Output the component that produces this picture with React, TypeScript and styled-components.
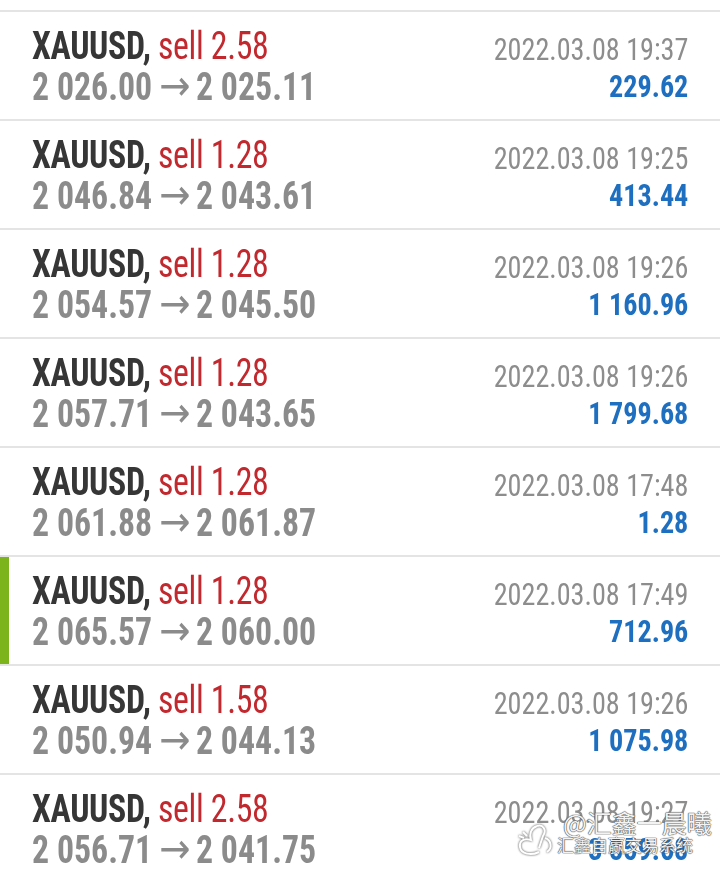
import styled, { createGlobalStyle } from "styled-components";

const GlobalStyle = createGlobalStyle`
    html, body {
        margin: 0;
        padding: 0;
        background: #ffffff;
    }

    body {
        font-family: Roboto, "Liberation Sans", sans-serif;
        font-stretch: 75%;
        overflow: hidden;
    }
`;

const Page = styled.div`
    position: relative;
    width: 720px;
    height: 874px;
    overflow: hidden;
    background: #fff;
`;

const List = styled.div`
    padding-top: 10px;
`;

const Row = styled.div<{ $active?: boolean }>`
    height: 107px;
    border-top: 2px solid #e4e4e4;
    display: flex;
    justify-content: space-between;
    align-items: flex-start;
    padding: 0 32px;
    box-shadow: ${(p) => (p.$active ? "inset 9px 0 0 #7cb41b" : "none")};
`;

// the app uses a narrower face than Roboto condensed gives, so squeeze a bit more
const Left = styled.div`
    padding-top: 15px;
    font-size: 38px;
    line-height: 39px;
    white-space: nowrap;
    transform: scaleX(0.89);
    transform-origin: left top;
`;

const Title = styled.div`
    letter-spacing: -0.4px;
`;

const Right = styled.div`
    padding-top: 19px;
    text-align: right;
    font-size: 31px;
    line-height: 37px;
    white-space: nowrap;
    transform: scaleX(0.908);
    transform-origin: right top;
`;

const Symbol = styled.span`
    font-weight: 700;
    color: #363636;
`;

const Side = styled.span`
    font-weight: 400;
    color: #c1292e;
`;

const Prices = styled.div`
    font-weight: 700;
    color: #8b8b8b;
`;

const Arrow = styled.span`
    font-family: "DejaVu Sans", sans-serif;
    font-stretch: normal;
    font-weight: 400;
    font-size: 42px;
    line-height: 39px;
    margin: 0 6px 0 8px;
`;

const Time = styled.div`
    color: #8d8d8d;
`;

const Profit = styled.div`
    font-weight: 700;
    color: #1f6fc0;
`;

const Watermark = styled.div`
    position: absolute;
    left: 515px;
    top: 810px;
    display: flex;
    align-items: flex-start;
    white-space: nowrap;
    color: rgba(255, 255, 255, 0.95);
    font-family: "Noto Sans CJK SC", sans-serif;
    font-stretch: normal;
    text-shadow: 0 0 1px #444, 0 0 1px #444, 0 0 1px #666;
    pointer-events: none;
`;

const MarkText = styled.div`
    display: flex;
    flex-direction: column;
    line-height: 1;
`;

const MarkTop = styled.span`
    font-size: 25px;
    margin-left: 6px;
`;

const MarkBottom = styled.span`
    font-size: 17px;
    margin-top: 1px;
`;

type Trade = {
    lots: string;
    open: string;
    close: string;
    time: string;
    profit: string;
    active?: boolean;
};

const trades: Trade[] = [
    { lots: "2.58", open: "2 026.00", close: "2 025.11", time: "2022.03.08 19:37", profit: "229.62" },
    { lots: "1.28", open: "2 046.84", close: "2 043.61", time: "2022.03.08 19:25", profit: "413.44" },
    { lots: "1.28", open: "2 054.57", close: "2 045.50", time: "2022.03.08 19:26", profit: "1 160.96" },
    { lots: "1.28", open: "2 057.71", close: "2 043.65", time: "2022.03.08 19:26", profit: "1 799.68" },
    { lots: "1.28", open: "2 061.88", close: "2 061.87", time: "2022.03.08 17:48", profit: "1.28" },
    { lots: "1.28", open: "2 065.57", close: "2 060.00", time: "2022.03.08 17:49", profit: "712.96", active: true },
    { lots: "1.58", open: "2 050.94", close: "2 044.13", time: "2022.03.08 19:26", profit: "1 075.98" },
    { lots: "2.58", open: "2 056.71", close: "2 041.75", time: "2022.03.08 19:27", profit: "3 859.68" },
];

const MarkLogo = () => (
    <svg width="42" height="42" viewBox="0 0 42 42" fill="none" stroke="#fff" strokeWidth="2" style={{ marginTop: 10 }}>
        <g style={{ filter: "drop-shadow(0 0 1px #444)" }}>
            <path d="M22 6 C16 8, 14 14, 16 20 C10 18, 4 20, 5 27 C6 34, 16 36, 24 32" />
            <path d="M22 6 C28 4, 32 10, 28 16 L24 28" />
            <path d="M30 18 C36 20, 38 28, 32 32" />
            <path d="M8 12 L12 16 M4 16 L9 18" />
        </g>
    </svg>
);

const App = () => {
    return (
        <Page>
            <GlobalStyle />
            <List>
                {trades.map((t, i) => (
                    <Row key={i} $active={t.active}>
                        <Left>
                            <Title>
                                <Symbol>XAUUSD,</Symbol> <Side>sell {t.lots}</Side>
                            </Title>
                            <Prices>
                                {t.open}
                                <Arrow>→</Arrow>
                                {t.close}
                            </Prices>
                        </Left>
                        <Right>
                            <Time>{t.time}</Time>
                            <Profit>{t.profit}</Profit>
                        </Right>
                    </Row>
                ))}
            </List>
            <Watermark>
                <MarkLogo />
                <MarkText>
                    <MarkTop>@汇鑫一晨曦</MarkTop>
                    <MarkBottom>汇鑫自赢交易系统</MarkBottom>
                </MarkText>
            </Watermark>
        </Page>
    );
};

export default App;
